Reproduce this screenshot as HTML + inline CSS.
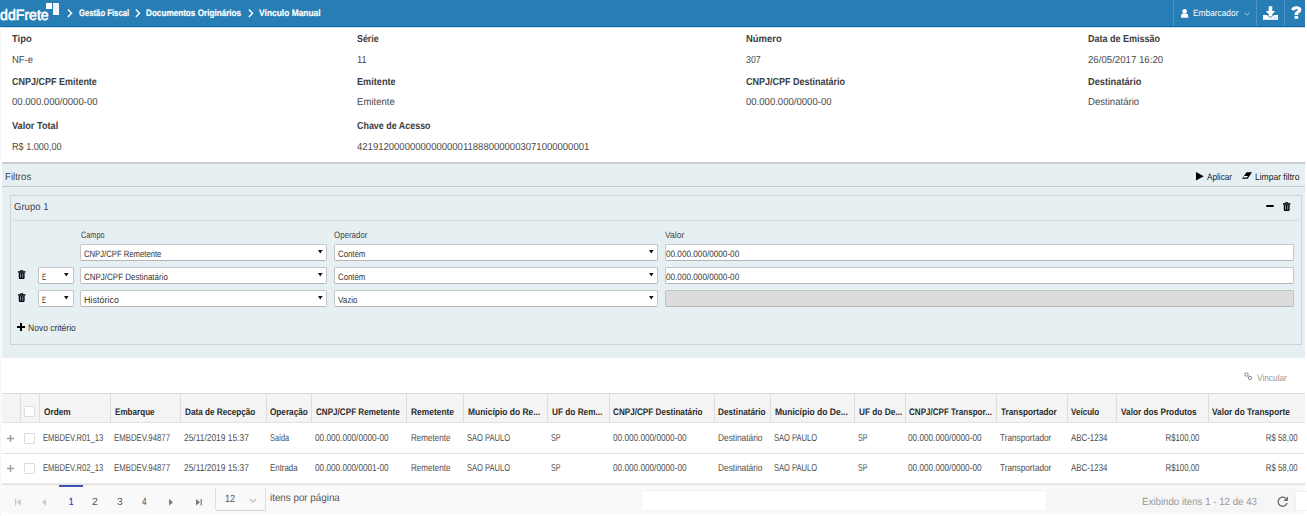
<!DOCTYPE html>
<html><head><meta charset="utf-8"><style>
html,body{margin:0;padding:0;background:#fff;width:1307px;height:516px;overflow:hidden;position:relative;font-family:"Liberation Sans",sans-serif}
body>div,body>svg{position:absolute}
.t{position:absolute;white-space:nowrap;line-height:1;transform-origin:0 0;text-rendering:geometricPrecision}
</style></head><body>
<div style="left:0px;top:0px;width:1305px;height:27px;background:#277eb4"></div>
<div style="left:0px;top:26px;width:1305px;height:1px;background:#146ca9"></div>
<div style="left:0px;top:27px;width:1305px;height:1px;background:#c4dbea"></div>
<span class="t" style="left:-2.85px;top:8.45px;font-size:15.0px;font-weight:normal;color:#fff;transform-origin:51.75px 0;transform:scaleX(0.9400);-webkit-text-stroke:0.6px #fff">ddFrete</span>
<div style="left:46px;top:3px;width:6px;height:6px;background:#fff"></div>
<div style="left:53px;top:3px;width:6px;height:6px;background:#eef3f8"></div>
<div style="left:53px;top:9px;width:6px;height:6px;background:#f7f9fb"></div>
<svg style="left:67.0px;top:8.6px" width="6" height="9" viewBox="0 0 6 9"><path d="M0.9 0.6 L4.5 4.3 L0.9 8.0" fill="none" stroke="#fff" stroke-width="1.4"/></svg>
<svg style="left:135.2px;top:8.6px" width="6" height="9" viewBox="0 0 6 9"><path d="M0.9 0.6 L4.5 4.3 L0.9 8.0" fill="none" stroke="#fff" stroke-width="1.4"/></svg>
<svg style="left:248.2px;top:8.6px" width="6" height="9" viewBox="0 0 6 9"><path d="M0.9 0.6 L4.5 4.3 L0.9 8.0" fill="none" stroke="#fff" stroke-width="1.4"/></svg>
<span class="t" style="left:78.60px;top:8.41px;font-size:9.4px;font-weight:bold;color:#fff;transform:scaleX(0.8216);-webkit-text-stroke:0.2px #fff">Gestão Fiscal</span>
<span class="t" style="left:146.40px;top:8.41px;font-size:9.4px;font-weight:bold;color:#fff;transform:scaleX(0.8697);-webkit-text-stroke:0.2px #fff">Documentos Originários</span>
<span class="t" style="left:259.00px;top:8.41px;font-size:9.4px;font-weight:bold;color:#fff;transform:scaleX(0.8955);-webkit-text-stroke:0.2px #fff">Vínculo Manual</span>
<div style="left:1173px;top:0px;width:1px;height:26px;background:#4f93c6"></div>
<div style="left:1256px;top:0px;width:1px;height:26px;background:#4f93c6"></div>
<div style="left:1284px;top:0px;width:1px;height:26px;background:#4f93c6"></div>
<svg style="left:1181px;top:9px" width="8" height="9" viewBox="0 0 8 9"><ellipse cx="3.6" cy="2.2" rx="2.3" ry="2.2" fill="#fff"/><path d="M0 8.7 V6.8 Q0 4.4 2.3 4.2 Q3.6 4.9 4.9 4.2 Q7.2 4.4 7.2 6.8 V8.7 Z" fill="#fff"/></svg>
<span class="t" style="left:1192.70px;top:9.48px;font-size:9.2px;font-weight:normal;color:#fff;transform:scaleX(0.9075);">Embarcador</span>
<svg style="left:1243.5px;top:12px" width="6" height="4" viewBox="0 0 6 4"><path d="M0.5 0.6 L3 3.2 L5.5 0.6" fill="none" stroke="#b9d3e8" stroke-width="0.9"/></svg>
<svg style="left:1263px;top:6px" width="15" height="14" viewBox="0 0 15 14"><rect x="0" y="9" width="15" height="4.8" fill="#fff"/><path d="M3.6 8.4 L7.5 11.6 L11.4 8.4" fill="none" stroke="#277eb4" stroke-width="1"/><path d="M5.7 0.2 H9.3 V5 H12.2 L7.5 10.3 L2.8 5 H5.7 Z" fill="#fff"/><rect x="10.6" y="11.3" width="1.1" height="1.1" fill="#277eb4" opacity="0.6"/><rect x="12.4" y="11.3" width="1.1" height="1.1" fill="#277eb4" opacity="0.6"/></svg>
<svg style="left:1291px;top:6px" width="11" height="13" viewBox="0 0 11 13"><path d="M0.3 3.9 Q0.6 0.2 5.4 0.2 Q10.4 0.2 10.4 3.8 Q10.4 6 8.2 7 Q7.2 7.5 7.2 8.4 V9 H3.6 V8 Q3.6 6.2 5.2 5.5 Q6.6 4.9 6.6 4 Q6.6 3 5.3 3 Q4 3 3.6 4.6 Z" fill="#fff"/><rect x="3.6" y="9.9" width="3.6" height="2.9" fill="#fff"/></svg>
<div style="left:1305px;top:0px;width:2px;height:27px;background:#fff"></div>
<div style="left:0px;top:27px;width:1px;height:489px;background:#f6f6f6"></div>
<span class="t" style="left:11.50px;top:34.93px;font-size:10.2px;font-weight:bold;color:#3c3c3c;transform:scaleX(0.9194);">Tipo</span>
<span class="t" style="left:357.00px;top:34.93px;font-size:10.2px;font-weight:bold;color:#3c3c3c;transform:scaleX(0.8683);">Série</span>
<span class="t" style="left:745.50px;top:34.93px;font-size:10.2px;font-weight:bold;color:#3c3c3c;transform:scaleX(0.9259);">Número</span>
<span class="t" style="left:1088.00px;top:34.93px;font-size:10.2px;font-weight:bold;color:#3c3c3c;transform:scaleX(0.8836);">Data de Emissão</span>
<span class="t" style="left:11.50px;top:55.63px;font-size:10.2px;font-weight:normal;color:#4a4a4a;transform:scaleX(0.9274);">NF-e</span>
<span class="t" style="left:357.00px;top:55.63px;font-size:10.2px;font-weight:normal;color:#4a4a4a;transform:scaleX(0.9050);">11</span>
<span class="t" style="left:745.50px;top:55.63px;font-size:10.2px;font-weight:normal;color:#4a4a4a;transform:scaleX(0.8630);">307</span>
<span class="t" style="left:1088.00px;top:55.63px;font-size:10.2px;font-weight:normal;color:#4a4a4a;transform:scaleX(0.9476);">26/05/2017 16:20</span>
<span class="t" style="left:11.50px;top:77.53px;font-size:10.2px;font-weight:bold;color:#3c3c3c;transform:scaleX(0.8818);">CNPJ/CPF Emitente</span>
<span class="t" style="left:357.00px;top:77.53px;font-size:10.2px;font-weight:bold;color:#3c3c3c;transform:scaleX(0.8991);">Emitente</span>
<span class="t" style="left:745.50px;top:77.53px;font-size:10.2px;font-weight:bold;color:#3c3c3c;transform:scaleX(0.8841);">CNPJ/CPF Destinatário</span>
<span class="t" style="left:1088.00px;top:77.53px;font-size:10.2px;font-weight:bold;color:#3c3c3c;transform:scaleX(0.9075);">Destinatário</span>
<span class="t" style="left:11.50px;top:98.33px;font-size:10.2px;font-weight:normal;color:#4a4a4a;transform:scaleX(0.9377);">00.000.000/0000-00</span>
<span class="t" style="left:357.00px;top:98.33px;font-size:10.2px;font-weight:normal;color:#4a4a4a;transform:scaleX(0.9407);">Emitente</span>
<span class="t" style="left:745.50px;top:98.33px;font-size:10.2px;font-weight:normal;color:#4a4a4a;transform:scaleX(0.9377);">00.000.000/0000-00</span>
<span class="t" style="left:1088.00px;top:98.33px;font-size:10.2px;font-weight:normal;color:#4a4a4a;transform:scaleX(0.9400);">Destinatário</span>
<span class="t" style="left:11.50px;top:121.63px;font-size:10.2px;font-weight:bold;color:#3c3c3c;transform:scaleX(0.9006);">Valor Total</span>
<span class="t" style="left:357.00px;top:121.63px;font-size:10.2px;font-weight:bold;color:#3c3c3c;transform:scaleX(0.8757);">Chave de Acesso</span>
<span class="t" style="left:11.50px;top:142.63px;font-size:10.2px;font-weight:normal;color:#4a4a4a;transform:scaleX(0.8922);">R$ 1.000,00</span>
<span class="t" style="left:357.00px;top:142.63px;font-size:10.2px;font-weight:normal;color:#4a4a4a;transform:scaleX(0.9346);">42191200000000000000118880000003071000000001</span>
<div style="left:2px;top:162px;width:1303px;height:196px;background:#e6f0f3"></div>
<div style="left:2px;top:162px;width:1303px;height:2px;background:#c9cdd0"></div>
<div style="left:2px;top:186px;width:1303px;height:1px;background:#c5cacd"></div>
<span class="t" style="left:5.40px;top:172.53px;font-size:10.2px;font-weight:normal;color:#444;transform:scaleX(0.9443);">Filtros</span>
<svg style="left:1196px;top:171.5px" width="8" height="9" viewBox="0 0 8 9"><path d="M0 0 L7.8 4.2 L0 8.4 Z" fill="#000"/></svg>
<span class="t" style="left:1206.50px;top:172.01px;font-size:9.4px;font-weight:normal;color:#222;transform:scaleX(0.8761);">Aplicar</span>
<svg style="left:1241px;top:172px" width="12" height="8" viewBox="0 0 12 8"><path d="M5.5 0.2 H11.0 L6.6 6.8 H0.9 Z" fill="#000"/><path d="M3.1 3.9 H7.0 L5.9 5.6 H2.0 Z" fill="#fff"/></svg>
<span class="t" style="left:1255.00px;top:172.01px;font-size:9.4px;font-weight:normal;color:#222;transform:scaleX(0.9069);">Limpar filtro</span>
<div style="left:10px;top:195px;width:1292px;height:150px;border:1px solid #cdd5d8;box-sizing:border-box"></div>
<div style="left:14px;top:220px;width:1284px;height:1px;background:#cdd5d8"></div>
<span class="t" style="left:14.30px;top:202.73px;font-size:10.2px;font-weight:normal;color:#444;transform:scaleX(0.9369);">Grupo 1</span>
<div style="left:1265.5px;top:205px;width:8.299999999999955px;height:2.1999999999999886px;background:#000;border-radius:1px"></div>
<svg style="left:1283px;top:202px" width="8" height="9" viewBox="0 0 8 9"><rect x="0" y="1.2" width="7.4" height="1.4" fill="#000"/><path d="M2.2 1.3 V0.2 H5.2 V1.3 H4.3 V0.9 H3.1 V1.3 Z" fill="#000"/><path d="M0.8 2.5 H6.6 V8.1 Q6.6 8.9 5.8 8.9 H1.6 Q0.8 8.9 0.8 8.1 Z" fill="#000"/><rect x="2.0" y="3.3" width="1.1" height="4.5" fill="#8c86a8"/><rect x="4.2" y="3.3" width="1.1" height="4.5" fill="#8c86a8"/></svg>
<span class="t" style="left:80.90px;top:231.28px;font-size:9.2px;font-weight:normal;color:#444;transform:scaleX(0.7933);">Campo</span>
<span class="t" style="left:334.00px;top:231.28px;font-size:9.2px;font-weight:normal;color:#444;transform:scaleX(0.8629);">Operador</span>
<span class="t" style="left:665.00px;top:231.28px;font-size:9.2px;font-weight:normal;color:#444;transform:scaleX(0.9282);">Valor</span>
<div style="left:80px;top:244px;width:247px;height:17px;background:#fff;border:1px solid #c6c6c6;border-bottom-color:#b5b5b5;border-radius:2px;box-sizing:border-box"></div>
<span class="t" style="left:83.60px;top:249.58px;font-size:9.2px;font-weight:normal;color:#333;transform:scaleX(0.8374);">CNPJ/CPF Remetente</span>
<svg style="left:318px;top:250px" width="5" height="4" viewBox="0 0 5 4"><path d="M0 0 H4.6 L2.3 3.4 Z" fill="#111"/></svg>
<div style="left:334px;top:244px;width:324px;height:17px;background:#fff;border:1px solid #c6c6c6;border-bottom-color:#b5b5b5;border-radius:2px;box-sizing:border-box"></div>
<span class="t" style="left:337.60px;top:249.58px;font-size:9.2px;font-weight:normal;color:#333;transform:scaleX(0.8509);">Contém</span>
<svg style="left:649px;top:250px" width="5" height="4" viewBox="0 0 5 4"><path d="M0 0 H4.6 L2.3 3.4 Z" fill="#111"/></svg>
<div style="left:665px;top:244px;width:629px;height:17px;background:#fff;border:1px solid #c6c6c6;border-bottom-color:#b5b5b5;border-radius:2px;box-sizing:border-box"></div>
<span class="t" style="left:666.00px;top:249.58px;font-size:9.2px;font-weight:normal;color:#333;transform:scaleX(0.8902);">00.000.000/0000-00</span>
<div style="left:80px;top:267px;width:247px;height:17px;background:#fff;border:1px solid #c6c6c6;border-bottom-color:#b5b5b5;border-radius:2px;box-sizing:border-box"></div>
<span class="t" style="left:83.60px;top:272.58px;font-size:9.2px;font-weight:normal;color:#333;transform:scaleX(0.8696);">CNPJ/CPF Destinatário</span>
<svg style="left:318px;top:273px" width="5" height="4" viewBox="0 0 5 4"><path d="M0 0 H4.6 L2.3 3.4 Z" fill="#111"/></svg>
<div style="left:334px;top:267px;width:324px;height:17px;background:#fff;border:1px solid #c6c6c6;border-bottom-color:#b5b5b5;border-radius:2px;box-sizing:border-box"></div>
<span class="t" style="left:337.60px;top:272.58px;font-size:9.2px;font-weight:normal;color:#333;transform:scaleX(0.8509);">Contém</span>
<svg style="left:649px;top:273px" width="5" height="4" viewBox="0 0 5 4"><path d="M0 0 H4.6 L2.3 3.4 Z" fill="#111"/></svg>
<div style="left:665px;top:267px;width:629px;height:17px;background:#fff;border:1px solid #c6c6c6;border-bottom-color:#b5b5b5;border-radius:2px;box-sizing:border-box"></div>
<span class="t" style="left:666.00px;top:272.58px;font-size:9.2px;font-weight:normal;color:#333;transform:scaleX(0.8902);">00.000.000/0000-00</span>
<div style="left:38px;top:267px;width:36px;height:17px;background:#fff;border:1px solid #c6c6c6;border-bottom-color:#b5b5b5;border-radius:2px;box-sizing:border-box"></div>
<span class="t" style="left:41.60px;top:272.58px;font-size:9.2px;font-weight:normal;color:#333;transform:scaleX(0.6489);">E</span>
<svg style="left:64px;top:273px" width="5" height="4" viewBox="0 0 5 4"><path d="M0 0 H4.6 L2.3 3.4 Z" fill="#111"/></svg>
<svg style="left:18px;top:269.8px" width="8" height="9" viewBox="0 0 8 9"><rect x="0" y="1.2" width="7.4" height="1.4" fill="#000"/><path d="M2.2 1.3 V0.2 H5.2 V1.3 H4.3 V0.9 H3.1 V1.3 Z" fill="#000"/><path d="M0.8 2.5 H6.6 V8.1 Q6.6 8.9 5.8 8.9 H1.6 Q0.8 8.9 0.8 8.1 Z" fill="#000"/><rect x="2.0" y="3.3" width="1.1" height="4.5" fill="#8c86a8"/><rect x="4.2" y="3.3" width="1.1" height="4.5" fill="#8c86a8"/></svg>
<div style="left:80px;top:290px;width:247px;height:17px;background:#fff;border:1px solid #c6c6c6;border-bottom-color:#b5b5b5;border-radius:2px;box-sizing:border-box"></div>
<span class="t" style="left:83.60px;top:295.58px;font-size:9.2px;font-weight:normal;color:#333;transform:scaleX(0.9780);">Histórico</span>
<svg style="left:318px;top:296px" width="5" height="4" viewBox="0 0 5 4"><path d="M0 0 H4.6 L2.3 3.4 Z" fill="#111"/></svg>
<div style="left:334px;top:290px;width:324px;height:17px;background:#fff;border:1px solid #c6c6c6;border-bottom-color:#b5b5b5;border-radius:2px;box-sizing:border-box"></div>
<span class="t" style="left:337.60px;top:295.58px;font-size:9.2px;font-weight:normal;color:#333;transform:scaleX(0.8722);">Vazio</span>
<svg style="left:649px;top:296px" width="5" height="4" viewBox="0 0 5 4"><path d="M0 0 H4.6 L2.3 3.4 Z" fill="#111"/></svg>
<div style="left:665px;top:290px;width:629px;height:17px;background:#dcdcdc;border:1px solid #c2c2c2;border-bottom-color:#b5b5b5;border-radius:2px;box-sizing:border-box"></div>
<div style="left:38px;top:290px;width:36px;height:17px;background:#fff;border:1px solid #c6c6c6;border-bottom-color:#b5b5b5;border-radius:2px;box-sizing:border-box"></div>
<span class="t" style="left:41.60px;top:295.58px;font-size:9.2px;font-weight:normal;color:#333;transform:scaleX(0.6489);">E</span>
<svg style="left:64px;top:296px" width="5" height="4" viewBox="0 0 5 4"><path d="M0 0 H4.6 L2.3 3.4 Z" fill="#111"/></svg>
<svg style="left:18px;top:292.8px" width="8" height="9" viewBox="0 0 8 9"><rect x="0" y="1.2" width="7.4" height="1.4" fill="#000"/><path d="M2.2 1.3 V0.2 H5.2 V1.3 H4.3 V0.9 H3.1 V1.3 Z" fill="#000"/><path d="M0.8 2.5 H6.6 V8.1 Q6.6 8.9 5.8 8.9 H1.6 Q0.8 8.9 0.8 8.1 Z" fill="#000"/><rect x="2.0" y="3.3" width="1.1" height="4.5" fill="#8c86a8"/><rect x="4.2" y="3.3" width="1.1" height="4.5" fill="#8c86a8"/></svg>
<svg style="left:17.0px;top:323.2px" width="8" height="8" viewBox="0 0 8 8"><path d="M3 0 H5 V3 H8 V5 H5 V8 H3 V5 H0 V3 H3 Z" fill="#000"/></svg>
<span class="t" style="left:28.40px;top:323.01px;font-size:9.4px;font-weight:normal;color:#333;transform:scaleX(0.9083);">Novo critério</span>
<svg style="left:1244px;top:372px" width="9" height="9" viewBox="0 0 9 9"><circle cx="2.5" cy="2.5" r="1.7" fill="none" stroke="#808080" stroke-width="1"/><circle cx="5.9" cy="5.9" r="1.7" fill="none" stroke="#808080" stroke-width="1"/></svg>
<span class="t" style="left:1256.50px;top:372.51px;font-size:9.4px;font-weight:normal;color:#999;transform:scaleX(0.8860);">Vincular</span>
<div style="left:2px;top:393px;width:1303px;height:30px;background:#f4f4f4"></div>
<div style="left:2px;top:393px;width:1303px;height:1px;background:#dadada"></div>
<div style="left:2px;top:422px;width:1303px;height:1px;background:#e2e2e2"></div>
<div style="left:20px;top:394px;width:1px;height:28px;background:#dddddd"></div>
<div style="left:39px;top:394px;width:1px;height:28px;background:#dddddd"></div>
<div style="left:110px;top:394px;width:1px;height:28px;background:#dddddd"></div>
<div style="left:180px;top:394px;width:1px;height:28px;background:#dddddd"></div>
<div style="left:266px;top:394px;width:1px;height:28px;background:#dddddd"></div>
<div style="left:311px;top:394px;width:1px;height:28px;background:#dddddd"></div>
<div style="left:406px;top:394px;width:1px;height:28px;background:#dddddd"></div>
<div style="left:463px;top:394px;width:1px;height:28px;background:#dddddd"></div>
<div style="left:547px;top:394px;width:1px;height:28px;background:#dddddd"></div>
<div style="left:609px;top:394px;width:1px;height:28px;background:#dddddd"></div>
<div style="left:714px;top:394px;width:1px;height:28px;background:#dddddd"></div>
<div style="left:770px;top:394px;width:1px;height:28px;background:#dddddd"></div>
<div style="left:854px;top:394px;width:1px;height:28px;background:#dddddd"></div>
<div style="left:905px;top:394px;width:1px;height:28px;background:#dddddd"></div>
<div style="left:996px;top:394px;width:1px;height:28px;background:#dddddd"></div>
<div style="left:1067px;top:394px;width:1px;height:28px;background:#dddddd"></div>
<div style="left:1116px;top:394px;width:1px;height:28px;background:#dddddd"></div>
<div style="left:1208px;top:394px;width:1px;height:28px;background:#dddddd"></div>
<span class="t" style="left:43.60px;top:407.82px;font-size:9.5px;font-weight:bold;color:#2b2b2b;transform:scaleX(0.8728);">Ordem</span>
<span class="t" style="left:115.00px;top:407.82px;font-size:9.5px;font-weight:bold;color:#2b2b2b;transform:scaleX(0.8524);">Embarque</span>
<span class="t" style="left:184.90px;top:407.82px;font-size:9.5px;font-weight:bold;color:#2b2b2b;transform:scaleX(0.8595);">Data de Recepção</span>
<span class="t" style="left:270.40px;top:407.82px;font-size:9.5px;font-weight:bold;color:#2b2b2b;transform:scaleX(0.8608);">Operação</span>
<span class="t" style="left:315.70px;top:407.82px;font-size:9.5px;font-weight:bold;color:#2b2b2b;transform:scaleX(0.8531);">CNPJ/CPF Remetente</span>
<span class="t" style="left:410.90px;top:407.82px;font-size:9.5px;font-weight:bold;color:#2b2b2b;transform:scaleX(0.8858);">Remetente</span>
<span class="t" style="left:467.80px;top:407.82px;font-size:9.5px;font-weight:bold;color:#2b2b2b;transform:scaleX(0.8889);">Município do Re...</span>
<span class="t" style="left:551.60px;top:407.82px;font-size:9.5px;font-weight:bold;color:#2b2b2b;transform:scaleX(0.8683);">UF do Rem...</span>
<span class="t" style="left:613.00px;top:407.82px;font-size:9.5px;font-weight:bold;color:#2b2b2b;transform:scaleX(0.8565);">CNPJ/CPF Destinatário</span>
<span class="t" style="left:718.20px;top:407.82px;font-size:9.5px;font-weight:bold;color:#2b2b2b;transform:scaleX(0.8669);">Destinatário</span>
<span class="t" style="left:775.20px;top:407.82px;font-size:9.5px;font-weight:bold;color:#2b2b2b;transform:scaleX(0.8963);">Município do De...</span>
<span class="t" style="left:858.90px;top:407.82px;font-size:9.5px;font-weight:bold;color:#2b2b2b;transform:scaleX(0.8691);">UF do De...</span>
<span class="t" style="left:908.90px;top:407.82px;font-size:9.5px;font-weight:bold;color:#2b2b2b;transform:scaleX(0.8489);">CNPJ/CPF Transpor...</span>
<span class="t" style="left:1000.80px;top:407.82px;font-size:9.5px;font-weight:bold;color:#2b2b2b;transform:scaleX(0.8663);">Transportador</span>
<span class="t" style="left:1071.20px;top:407.82px;font-size:9.5px;font-weight:bold;color:#2b2b2b;transform:scaleX(0.8481);">Veículo</span>
<span class="t" style="left:1120.60px;top:407.82px;font-size:9.5px;font-weight:bold;color:#2b2b2b;transform:scaleX(0.8678);">Valor dos Produtos</span>
<span class="t" style="left:1211.70px;top:407.82px;font-size:9.5px;font-weight:bold;color:#2b2b2b;transform:scaleX(0.8721);">Valor do Transporte</span>
<div style="left:24px;top:406px;width:11px;height:11px;background:#fff;border:1px solid #dcdcdc;border-radius:1px;box-sizing:border-box"></div>
<div style="left:2px;top:453px;width:1303px;height:1px;background:#e4e4e4"></div>
<div style="left:2px;top:483px;width:1303px;height:1px;background:#eaeaea"></div>
<div style="left:2px;top:484px;width:1303px;height:1px;background:#dfdfdf"></div>
<span class="t" style="left:43.00px;top:434.30px;font-size:10.0px;font-weight:normal;color:#4d4d4d;transform:scaleX(0.7623);">EMBDEV.R01_13</span>
<span class="t" style="left:114.20px;top:434.30px;font-size:10.0px;font-weight:normal;color:#4d4d4d;transform:scaleX(0.7789);">EMBDEV.94877</span>
<span class="t" style="left:184.40px;top:434.30px;font-size:10.0px;font-weight:normal;color:#4d4d4d;transform:scaleX(0.8405);">25/11/2019 15:37</span>
<span class="t" style="left:269.90px;top:434.30px;font-size:10.0px;font-weight:normal;color:#4d4d4d;transform:scaleX(0.7328);">Saída</span>
<span class="t" style="left:315.20px;top:434.30px;font-size:10.0px;font-weight:normal;color:#4d4d4d;transform:scaleX(0.8212);">00.000.000/0000-00</span>
<span class="t" style="left:410.60px;top:434.30px;font-size:10.0px;font-weight:normal;color:#4d4d4d;transform:scaleX(0.8098);">Remetente</span>
<span class="t" style="left:467.20px;top:434.30px;font-size:10.0px;font-weight:normal;color:#4d4d4d;transform:scaleX(0.7566);">SAO PAULO</span>
<span class="t" style="left:550.60px;top:434.30px;font-size:10.0px;font-weight:normal;color:#4d4d4d;transform:scaleX(0.7068);">SP</span>
<span class="t" style="left:612.80px;top:434.30px;font-size:10.0px;font-weight:normal;color:#4d4d4d;transform:scaleX(0.8212);">00.000.000/0000-00</span>
<span class="t" style="left:717.60px;top:434.30px;font-size:10.0px;font-weight:normal;color:#4d4d4d;transform:scaleX(0.8333);">Destinatário</span>
<span class="t" style="left:774.00px;top:434.30px;font-size:10.0px;font-weight:normal;color:#4d4d4d;transform:scaleX(0.7566);">SAO PAULO</span>
<span class="t" style="left:858.20px;top:434.30px;font-size:10.0px;font-weight:normal;color:#4d4d4d;transform:scaleX(0.7068);">SP</span>
<span class="t" style="left:907.90px;top:434.30px;font-size:10.0px;font-weight:normal;color:#4d4d4d;transform:scaleX(0.8212);">00.000.000/0000-00</span>
<span class="t" style="left:1000.00px;top:434.30px;font-size:10.0px;font-weight:normal;color:#4d4d4d;transform:scaleX(0.8221);">Transportador</span>
<span class="t" style="left:1070.60px;top:434.30px;font-size:10.0px;font-weight:normal;color:#4d4d4d;transform:scaleX(0.7896);">ABC-1234</span>
<span class="t" style="left:1155.60px;top:434.30px;font-size:10.0px;font-weight:normal;color:#4d4d4d;transform-origin:43.40px 0;transform:scaleX(0.7811);">R$100,00</span>
<span class="t" style="left:1257.40px;top:434.30px;font-size:10.0px;font-weight:normal;color:#4d4d4d;transform-origin:40.60px 0;transform:scaleX(0.7833);">R$ 58,00</span>
<svg style="left:7.3px;top:435px" width="7" height="7" viewBox="0 0 7 7"><path d="M2.8 0 H4.2 V2.8 H7 V4.2 H4.2 V7 H2.8 V4.2 H0 V2.8 H2.8 Z" fill="#9c9c9c"/></svg>
<div style="left:24px;top:433px;width:11px;height:11px;background:#fff;border:1px solid #dcdcdc;border-radius:1px;box-sizing:border-box"></div>
<span class="t" style="left:43.00px;top:464.30px;font-size:10.0px;font-weight:normal;color:#4d4d4d;transform:scaleX(0.7623);">EMBDEV.R02_13</span>
<span class="t" style="left:114.20px;top:464.30px;font-size:10.0px;font-weight:normal;color:#4d4d4d;transform:scaleX(0.7789);">EMBDEV.94877</span>
<span class="t" style="left:184.40px;top:464.30px;font-size:10.0px;font-weight:normal;color:#4d4d4d;transform:scaleX(0.8405);">25/11/2019 15:37</span>
<span class="t" style="left:269.90px;top:464.30px;font-size:10.0px;font-weight:normal;color:#4d4d4d;transform:scaleX(0.7892);">Entrada</span>
<span class="t" style="left:315.20px;top:464.30px;font-size:10.0px;font-weight:normal;color:#4d4d4d;transform:scaleX(0.8212);">00.000.000/0001-00</span>
<span class="t" style="left:410.60px;top:464.30px;font-size:10.0px;font-weight:normal;color:#4d4d4d;transform:scaleX(0.8098);">Remetente</span>
<span class="t" style="left:467.20px;top:464.30px;font-size:10.0px;font-weight:normal;color:#4d4d4d;transform:scaleX(0.7566);">SAO PAULO</span>
<span class="t" style="left:550.60px;top:464.30px;font-size:10.0px;font-weight:normal;color:#4d4d4d;transform:scaleX(0.7068);">SP</span>
<span class="t" style="left:612.80px;top:464.30px;font-size:10.0px;font-weight:normal;color:#4d4d4d;transform:scaleX(0.8212);">00.000.000/0000-00</span>
<span class="t" style="left:717.60px;top:464.30px;font-size:10.0px;font-weight:normal;color:#4d4d4d;transform:scaleX(0.8333);">Destinatário</span>
<span class="t" style="left:774.00px;top:464.30px;font-size:10.0px;font-weight:normal;color:#4d4d4d;transform:scaleX(0.7566);">SAO PAULO</span>
<span class="t" style="left:858.20px;top:464.30px;font-size:10.0px;font-weight:normal;color:#4d4d4d;transform:scaleX(0.7068);">SP</span>
<span class="t" style="left:907.90px;top:464.30px;font-size:10.0px;font-weight:normal;color:#4d4d4d;transform:scaleX(0.8212);">00.000.000/0000-00</span>
<span class="t" style="left:1000.00px;top:464.30px;font-size:10.0px;font-weight:normal;color:#4d4d4d;transform:scaleX(0.8221);">Transportador</span>
<span class="t" style="left:1070.60px;top:464.30px;font-size:10.0px;font-weight:normal;color:#4d4d4d;transform:scaleX(0.7896);">ABC-1234</span>
<span class="t" style="left:1155.60px;top:464.30px;font-size:10.0px;font-weight:normal;color:#4d4d4d;transform-origin:43.40px 0;transform:scaleX(0.7811);">R$100,00</span>
<span class="t" style="left:1257.40px;top:464.30px;font-size:10.0px;font-weight:normal;color:#4d4d4d;transform-origin:40.60px 0;transform:scaleX(0.7833);">R$ 58,00</span>
<svg style="left:7.3px;top:465px" width="7" height="7" viewBox="0 0 7 7"><path d="M2.8 0 H4.2 V2.8 H7 V4.2 H4.2 V7 H2.8 V4.2 H0 V2.8 H2.8 Z" fill="#9c9c9c"/></svg>
<div style="left:24px;top:463px;width:11px;height:11px;background:#fff;border:1px solid #dcdcdc;border-radius:1px;box-sizing:border-box"></div>
<div style="left:2px;top:485px;width:1303px;height:28px;background:#f9f9f9"></div>
<div style="left:1047px;top:488px;width:248px;height:24px;background:#f6f6f6"></div>
<div style="left:641px;top:490px;width:406px;height:21px;background:#fff;border:1px solid #f3f3f3;box-sizing:border-box"></div>
<div style="left:1295px;top:491px;width:13px;height:20px;background:#fff;border:1px solid #f0f0f0;box-sizing:border-box"></div>
<div style="left:59px;top:485px;width:24px;height:2px;background:#3f51b5"></div>
<svg style="left:14.5px;top:498.5px" width="7" height="7" viewBox="0 0 7 7"><rect x="0" y="0" width="1.2" height="6.5" fill="#c8c8c8"/><path d="M5.8 0 V6.5 L1.8 3.25 Z" fill="#c8c8c8"/></svg>
<svg style="left:42px;top:498.5px" width="5" height="7" viewBox="0 0 5 7"><path d="M4 0 V6.5 L0 3.25 Z" fill="#c8c8c8"/></svg>
<svg style="left:169px;top:498.5px" width="5" height="7" viewBox="0 0 5 7"><path d="M0 0 V6.5 L4 3.25 Z" fill="#7a7a7a"/></svg>
<svg style="left:195.5px;top:498.5px" width="7" height="7" viewBox="0 0 7 7"><path d="M0 0 V6.5 L4 3.25 Z" fill="#7a7a7a"/><rect x="4.6" y="0" width="1.2" height="6.5" fill="#7a7a7a"/></svg>
<span class="t" style="left:68.50px;top:497.76px;font-size:10.4px;font-weight:bold;color:#3f51b5;transform:scaleX(0.7383);">1</span>
<span class="t" style="left:92.00px;top:497.76px;font-size:10.4px;font-weight:normal;color:#555;transform:scaleX(1.0130);">2</span>
<span class="t" style="left:116.90px;top:497.76px;font-size:10.4px;font-weight:normal;color:#555;transform:scaleX(0.9615);">3</span>
<span class="t" style="left:142.00px;top:497.76px;font-size:10.4px;font-weight:normal;color:#555;transform:scaleX(0.8070);">4</span>
<div style="left:215px;top:488px;width:51px;height:23px;background:#f9f9f9;border:1px solid #dedede;border-top:0;border-bottom-color:#d0d0d0;border-radius:0 0 2px 2px;box-sizing:border-box"></div>
<span class="t" style="left:225.00px;top:494.76px;font-size:10.4px;font-weight:normal;color:#555;transform:scaleX(0.8836);">12</span>
<svg style="left:249px;top:498.3px" width="9" height="6" viewBox="0 0 9 6"><path d="M0.8 0.8 L4 4.2 L7.2 0.8" fill="none" stroke="#c8c8c8" stroke-width="1.5"/></svg>
<span class="t" style="left:270.40px;top:494.26px;font-size:10.4px;font-weight:normal;color:#555;transform:scaleX(0.9440);">itens por página</span>
<span class="t" style="left:1142.40px;top:498.16px;font-size:10.4px;font-weight:normal;color:#999;transform:scaleX(0.9347);">Exibindo itens 1 - 12 de 43</span>
<svg style="left:1275.3px;top:494.1px" width="16" height="16" viewBox="0 0 16 16"><path transform="scale(0.644)" d="M17.65 6.35C16.2 4.9 14.21 4 12 4c-4.42 0-7.99 3.58-7.990 8s3.57 8 7.99 8c3.73 0 6.84-2.55 7.73-6h-2.08c-.82 2.33-3.04 4-5.65 4-3.31 0-6-2.69-6-6s2.690-6 6-6c1.66 0 3.14.69 4.220 1.78L13 11h7V4l-2.35 2.350z" fill="#6b6b6b"/></svg>
</body></html>
